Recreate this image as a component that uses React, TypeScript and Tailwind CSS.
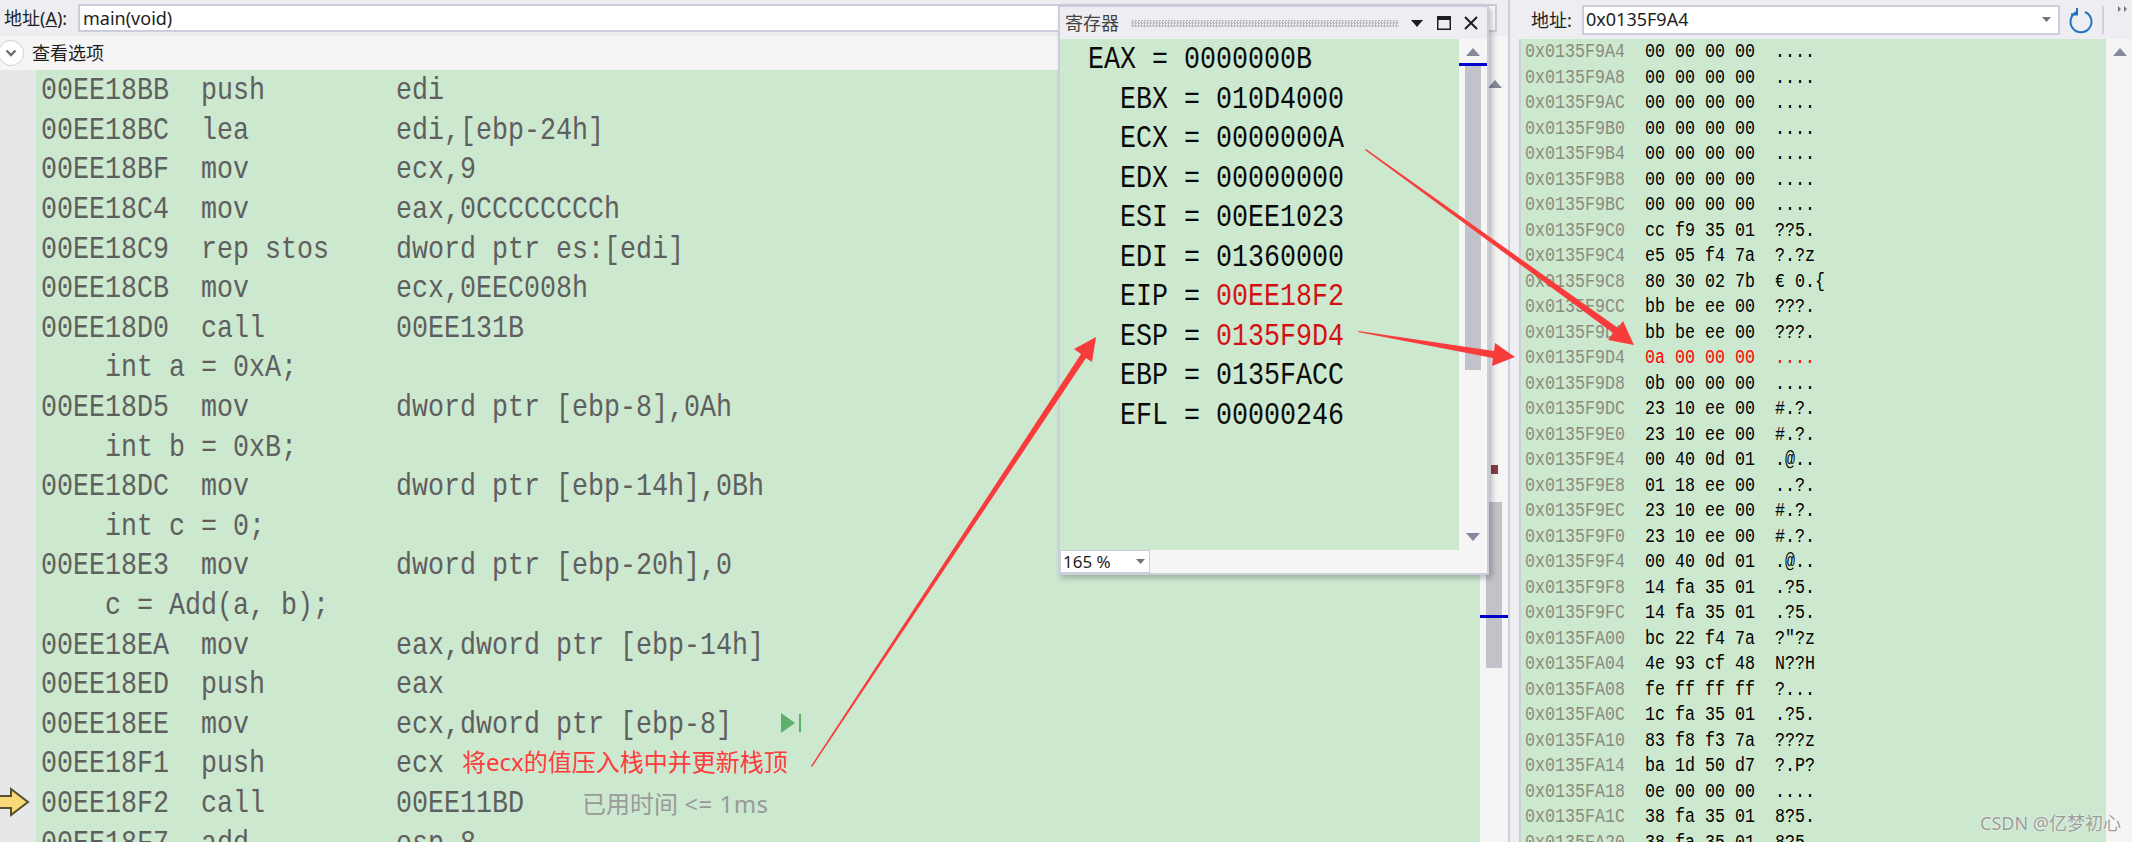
const code = [
  "00EE18BB  push        edi",
  "00EE18BC  lea         edi,[ebp-24h]",
  "00EE18BF  mov         ecx,9",
  "00EE18C4  mov         eax,0CCCCCCCCh",
  "00EE18C9  rep stos    dword ptr es:[edi]",
  "00EE18CB  mov         ecx,0EEC008h",
  "00EE18D0  call        00EE131B",
  "    int a = 0xA;",
  "00EE18D5  mov         dword ptr [ebp-8],0Ah",
  "    int b = 0xB;",
  "00EE18DC  mov         dword ptr [ebp-14h],0Bh",
  "    int c = 0;",
  "00EE18E3  mov         dword ptr [ebp-20h],0",
  "    c = Add(a, b);",
  "00EE18EA  mov         eax,dword ptr [ebp-14h]",
  "00EE18ED  push        eax",
  "00EE18EE  mov         ecx,dword ptr [ebp-8]",
  "00EE18F1  push        ecx",
  "00EE18F2  call        00EE11BD",
  "00EE18F7  add         esp,8",
];

const regs: [string, string, boolean][] = [
  ["EAX", "0000000B", false],
  ["  EBX", "010D4000", false],
  ["  ECX", "0000000A", false],
  ["  EDX", "00000000", false],
  ["  ESI", "00EE1023", false],
  ["  EDI", "01360000", false],
  ["  EIP", "00EE18F2", true],
  ["  ESP", "0135F9D4", true],
  ["  EBP", "0135FACC", false],
  ["  EFL", "00000246", false],
];

const hex: [string, string, string][] = [
  ["0x0135F9A4", "00 00 00 00", "...."],
  ["0x0135F9A8", "00 00 00 00", "...."],
  ["0x0135F9AC", "00 00 00 00", "...."],
  ["0x0135F9B0", "00 00 00 00", "...."],
  ["0x0135F9B4", "00 00 00 00", "...."],
  ["0x0135F9B8", "00 00 00 00", "...."],
  ["0x0135F9BC", "00 00 00 00", "...."],
  ["0x0135F9C0", "cc f9 35 01", "??5."],
  ["0x0135F9C4", "e5 05 f4 7a", "?.?z"],
  ["0x0135F9C8", "80 30 02 7b", "€ 0.{"],
  ["0x0135F9CC", "bb be ee 00", "???."],
  ["0x0135F9D0", "bb be ee 00", "???."],
  ["0x0135F9D4", "0a 00 00 00", "...."],
  ["0x0135F9D8", "0b 00 00 00", "...."],
  ["0x0135F9DC", "23 10 ee 00", "#.?."],
  ["0x0135F9E0", "23 10 ee 00", "#.?."],
  ["0x0135F9E4", "00 40 0d 01", ".@.."],
  ["0x0135F9E8", "01 18 ee 00", "..?."],
  ["0x0135F9EC", "23 10 ee 00", "#.?."],
  ["0x0135F9F0", "23 10 ee 00", "#.?."],
  ["0x0135F9F4", "00 40 0d 01", ".@.."],
  ["0x0135F9F8", "14 fa 35 01", ".?5."],
  ["0x0135F9FC", "14 fa 35 01", ".?5."],
  ["0x0135FA00", "bc 22 f4 7a", "?″?z"],
  ["0x0135FA04", "4e 93 cf 48", "N??H"],
  ["0x0135FA08", "fe ff ff ff", "?..."],
  ["0x0135FA0C", "1c fa 35 01", ".?5."],
  ["0x0135FA10", "83 f8 f3 7a", "???z"],
  ["0x0135FA14", "ba 1d 50 d7", "?.P?"],
  ["0x0135FA18", "0e 00 00 00", "...."],
  ["0x0135FA1C", "38 fa 35 01", "8?5."],
  ["0x0135FA20", "38 fa 35 01", "8?5."],
];

function Tri({ down = false, className = "" }: { down?: boolean; className?: string }) {
  return (
    <svg width="14" height="8" viewBox="0 0 14 8" className={className}>
      <path d={down ? "M0 0H14L7 8Z" : "M0 8H14L7 0Z"} fill="#868999" />
    </svg>
  );
}

export default function App() {
  const mono = "font-['Liberation_Mono',monospace] whitespace-pre origin-left scale-x-[0.8333] inline-block";
  return (
    <div className="relative w-[2132px] h-[842px] overflow-hidden flex bg-[#eeeef2] font-['Noto_Sans','Noto_Sans_CJK_SC',sans-serif] text-[#1e1e1e]">
      {/* left pane */}
      <div className="w-[1508px] h-full flex flex-col shrink-0">
        <div className="h-[36px] shrink-0 flex items-center pl-[4px] pr-[11px] bg-[#eeeef2]">
          <span className="text-[18px] leading-none whitespace-nowrap w-[74px]">
            地址(<span className="underline">A</span>):
          </span>
          <div className="flex-1 h-[28px] bg-white border-2 border-[#cccedb] flex items-center pl-[3px] text-[18px]">
            main(void)
          </div>
        </div>
        <div className="h-[34px] shrink-0 flex items-center bg-[#f5f5f5] gap-[8px]">
          <div className="w-[26px] h-[26px] rounded-full bg-white border border-[#cccedb] -ml-[2px] flex items-center justify-center">
            <svg width="12" height="8" viewBox="0 0 12 8">
              <path d="M1.5 1.5L6 6L10.5 1.5" fill="none" stroke="#6d6d6d" strokeWidth="2.4" />
            </svg>
          </div>
          <span className="text-[18px] leading-none">查看选项</span>
        </div>
        <div className="flex-1 flex min-h-0">
          <div className="w-[36px] shrink-0 bg-[#e6e7e8]" />
          <div className="flex-1 bg-[#cce8cf] overflow-hidden pl-[5px] pt-[1px] text-[#5f5f5f]">
            {code.map((l, i) => {
              const src = l.startsWith(" ");
              return (
                <div key={i} className="h-[39.6px] flex items-center">
                  <span className={`${mono} text-[32px] leading-[39px]`}>
                    {src ? (
                      l
                    ) : (
                      <>
                        <span className="inline-block w-[426px]">{l.slice(0, 22)}</span>
                        {l.slice(22)}
                      </>
                    )}
                  </span>
                </div>
              );
            })}
          </div>
          <div className="w-[28px] shrink-0 bg-[#f5f5f5] relative">
            <Tri className="absolute left-[8px] top-[10px]" />
            <div className="absolute left-[11px] top-[395px] w-[7px] h-[9px] bg-[#8b3a44]" />
            <div className="absolute left-[6px] top-[432px] w-[16px] h-[166px] bg-[#c2c3c9]" />
            <div className="absolute left-0 top-[545px] w-[28px] h-[3px] bg-[#0000cd]" />
          </div>
        </div>
      </div>

      {/* divider */}
      <div className="w-[2px] shrink-0 bg-[#cccedb]" />

      {/* right pane */}
      <div className="flex-1 min-w-0 h-full flex flex-col bg-[#eeeef2]">
        <div className="h-[39px] shrink-0 flex items-center pl-[21px] relative">
          <span className="text-[18px] leading-none whitespace-nowrap w-[51px]">地址:</span>
          <div className="w-[478px] h-[30px] bg-white border-2 border-[#cccedb] flex items-center justify-between pl-[2px] pr-[7px] text-[18px]">
            <span>0x0135F9A4</span>
            <svg width="9" height="5" viewBox="0 0 9 5"><path d="M0 0H9L4.500 5Z" fill="#71717a" /></svg>
          </div>
          <svg width="26" height="28" viewBox="0 0 26 28" className="ml-[8px]">
            <path d="M9 6A10.500 10.500 0 1 0 17 6" fill="none" stroke="#1e73c4" strokeWidth="2" />
            <path d="M9 2V8.500H3" fill="none" stroke="#1e73c4" strokeWidth="2" />
          </svg>
          <div className="w-[2px] h-[28px] bg-[#cfd0d8] ml-[8px]" />
          <svg width="10" height="6" viewBox="0 0 10 6" className="ml-[14px] -mt-[22px]">
            <path d="M0 0L3 3L0 6ZM6 0L9 3L6 6Z" fill="#777" />
          </svg>
        </div>
        <div className="flex-1 flex min-h-0 pl-[9px]">
          <div className="flex-1 bg-[#cce8cf] border-l-[2px] border-[#cccedb] overflow-hidden pl-[4px]">
            {hex.map((r, i) => {
              const red = r[0] === "0x0135F9D4";
              return (
                <div key={i} className="h-[25.5px] flex items-center">
                  <span className={`${mono} text-[20px] leading-[25px]`}>
                    <span className="text-[#8b8b80]">{r[0]}</span>
                    <span className={red ? "text-[#ff0000]" : "text-black"}>{"  " + r[1] + "  " + r[2]}</span>
                  </span>
                </div>
              );
            })}
          </div>
          <div className="w-[26px] shrink-0 bg-[#f5f5f5] pt-[9px] pl-[7px]">
            <Tri />
          </div>
        </div>
      </div>

      {/* floating register window */}
      <div className="absolute left-[1058px] top-[5px] w-[431px] h-[570px] border-2 border-[#cccedb] bg-[#f5f5f5] flex flex-col shadow-[3px_3px_6px_rgba(0,0,0,0.25)]">
        <div className="h-[32px] shrink-0 bg-[#eeeef2] flex items-center pl-[5px] pr-[6px]">
          <span className="text-[18px] leading-none text-[#444] w-[66px]">寄存器</span>
          <div className="w-[268px] h-[7px] bg-[repeating-conic-gradient(#b9b9c0_0_25%,transparent_0_50%)] bg-[length:3px_3px]" />
          <svg width="12" height="7" viewBox="0 0 12 7" className="ml-[12px]"><path d="M0 0H12L6 7Z" fill="#1e1e1e" /></svg>
          <svg width="14" height="14" viewBox="0 0 14 14" className="ml-[14px]">
            <path d="M.75 .75H13.250V13.250H.75Z" fill="none" stroke="#1e1e1e" strokeWidth="1.500" />
            <path d="M0 1H14V4H0Z" fill="#1e1e1e" />
          </svg>
          <svg width="14" height="14" viewBox="0 0 14 14" className="ml-[13px]">
            <path d="M1 1L13 13M13 1L1 13" stroke="#1e1e1e" strokeWidth="2" />
          </svg>
        </div>
        <div className="flex-1 flex min-h-0">
          <div className="flex-1 bg-[#cce8cf] pl-[28px] pt-[1px] text-[#0a0a0a] overflow-hidden">
            {regs.map(([n, v, red]) => (
              <div key={n} className="h-[39.5px] flex items-center">
                <span className={`${mono} text-[32px] leading-[39px]`}>
                  {n + " = "}
                  <span className={red ? "text-[#d41111]" : ""}>{v}</span>
                </span>
              </div>
            ))}
          </div>
          <div className="w-[28px] shrink-0 relative">
            <Tri className="absolute left-[7px] top-[9px]" />
            <div className="absolute left-[6px] top-[26px] w-[16px] h-[305px] bg-[#c2c3c9]" />
            <div className="absolute left-0 top-[24px] w-[28px] h-[3px] bg-[#0000cd]" />
            <Tri down className="absolute left-[7px] bottom-[9px]" />
          </div>
        </div>
        <div className="h-[23px] shrink-0 flex">
          <div className="w-[90px] h-full bg-white border border-[#cccedb] flex items-center justify-between pl-[2px] pr-[4px] text-[17px]">
            <span>165 %</span>
            <svg width="9" height="5" viewBox="0 0 9 5"><path d="M0 0H9L4.500 5Z" fill="#71717a" /></svg>
          </div>
        </div>
      </div>

      {/* step icon and current-line arrow in the disassembly */}
      <svg width="22" height="20" viewBox="0 0 22 20" className="absolute left-[780px] top-[713px]">
        <path d="M1 0L15 10L1 20Z" fill="#5fae6a" />
        <path d="M20 1V19" stroke="#5fae6a" strokeWidth="2" />
      </svg>
      <svg width="30" height="30" viewBox="0 0 30 30" className="absolute left-0 top-[787px]">
        <path d="M-2 9H11V2L28 15L11 28V21H-2Z" fill="#f8d878" stroke="#54502e" strokeWidth="2" />
      </svg>

      {/* annotations over the code */}
      <span className="absolute left-[462px] top-[745px] text-[24px] leading-[34px] text-[#ff3b3b] whitespace-nowrap">
        将ecx的值压入栈中并更新栈顶
      </span>
      <span className="absolute left-[582px] top-[787px] text-[24px] leading-[34px] text-[#9a9a9a] whitespace-nowrap">
        已用时间 <span className="tracking-[0.5px]">&lt;= 1ms</span>
      </span>

      {/* red arrows */}
      <svg width="2132" height="842" viewBox="0 0 2132 842" className="absolute left-0 top-0 pointer-events-none">
        <path d="M1365 150L1366 149L1618 328L1623 321L1634 345L1608 340L1613 333Z" fill="#f83c3c" />
        <path d="M1358 332L1358.500 331L1494 351L1495 343L1515 357L1492 366L1493 358Z" fill="#f83c3c" />
        <path d="M812 767L811 766L1081 354L1074 349L1096 337L1092 362L1086 358Z" fill="#f83c3c" />
      </svg>

      {/* watermark */}
      <span className="absolute left-[1980px] top-[812px] text-[18px] leading-[22px] text-[#9c9c9c] whitespace-nowrap [text-shadow:0_0_2px_#fff]">
        CSDN @亿梦初心
      </span>
    </div>
  );
}
